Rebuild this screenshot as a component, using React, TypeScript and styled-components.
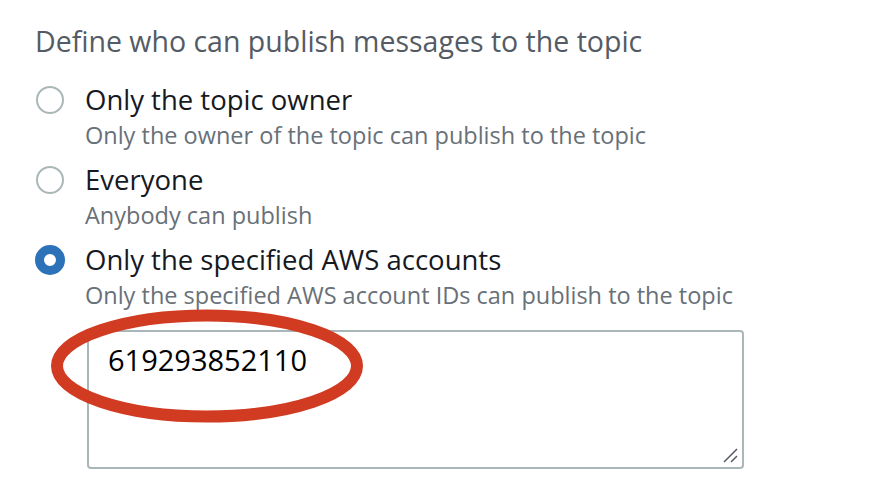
import React from "react";
import styled, { createGlobalStyle } from "styled-components";

const Global = createGlobalStyle`
  html, body { margin: 0; padding: 0; background: #ffffff; }
  body { font-family: "Open Sans", "Noto Sans", Arial, sans-serif; }
`;

const Page = styled.div`
  width: 894px;
  height: 498px;
  box-sizing: border-box;
  padding: 23px 0 0 36px;
  position: relative;
  overflow: hidden;
`;

const Heading = styled.div`
  font-size: 28.5px;
  line-height: 36px;
  color: #545b64;
  margin-bottom: 23px;
  margin-left: -1px;
`;

const Options = styled.div`
  display: flex;
  flex-direction: column;
  gap: 10px;
`;

const Option = styled.div`
  display: grid;
  grid-template-columns: 49px 1fr;
`;

const Radio = styled.span<{ $checked?: boolean }>`
  width: ${(p) => (p.$checked ? "30px" : "28px")};
  height: ${(p) => (p.$checked ? "30px" : "28px")};
  box-sizing: border-box;
  border-radius: 50%;
  margin-top: ${(p) => (p.$checked ? "3px" : "4px")};
  margin-left: ${(p) => (p.$checked ? "-1px" : "0")};
  border: ${(p) => (p.$checked ? "9.5px solid #2c72b9" : "2px solid #aab7b8")};
  background: #fff;
`;

const Texts = styled.div`
  display: flex;
  flex-direction: column;
`;

const Label = styled.div`
  font-size: 27.5px;
  line-height: 36px;
  color: #16191f;
`;

const Desc = styled.div`
  font-size: 23.5px;
  line-height: 34px;
  color: #687078;
`;

const FieldWrap = styled.div`
  position: relative;
  margin: 18px 0 0 51px;
  width: 657px;
`;

const TextArea = styled.div`
  box-sizing: border-box;
  height: 139px;
  border: 2px solid #aab7b8;
  border-radius: 4px;
  padding: 10px 19px;
  font-size: 29px;
  line-height: 36px;
  color: #000;
  position: relative;
`;

const Grip = styled.svg`
  position: absolute;
  right: 4px;
  bottom: 4px;
`;

const Annotation = styled.svg`
  position: absolute;
  left: -37px;
  top: -24px;
  pointer-events: none;
`;

const items = [
  { label: "Only the topic owner", desc: "Only the owner of the topic can publish to the topic" },
  { label: "Everyone", desc: "Anybody can publish" },
  { label: "Only the specified AWS accounts", desc: "Only the specified AWS account IDs can publish to the topic", checked: true },
];

export default function App() {
  return (
    <>
      <Global />
      <Page>
        <Heading>Define who can publish messages to the topic</Heading>
        <Options>
          {items.map((it) => (
            <Option key={it.label}>
              <Radio $checked={it.checked} />
              <Texts>
                <Label>{it.label}</Label>
                <Desc>{it.desc}</Desc>
              </Texts>
            </Option>
          ))}
        </Options>
        <FieldWrap>
          <TextArea>
            619293852110
            <Grip width="16" height="16" viewBox="0 0 16 16">
              <path d="M2 15 L15 2 M9 15 L15 9" stroke="#545b64" strokeWidth="1.5" />
            </Grip>
          </TextArea>
          <Annotation width="322" height="122" viewBox="0 0 322 122">
            <ellipse cx="157" cy="60" rx="150" ry="50.5" fill="none" stroke="#d13b21" strokeWidth="12" />
          </Annotation>
        </FieldWrap>
      </Page>
    </>
  );
}
